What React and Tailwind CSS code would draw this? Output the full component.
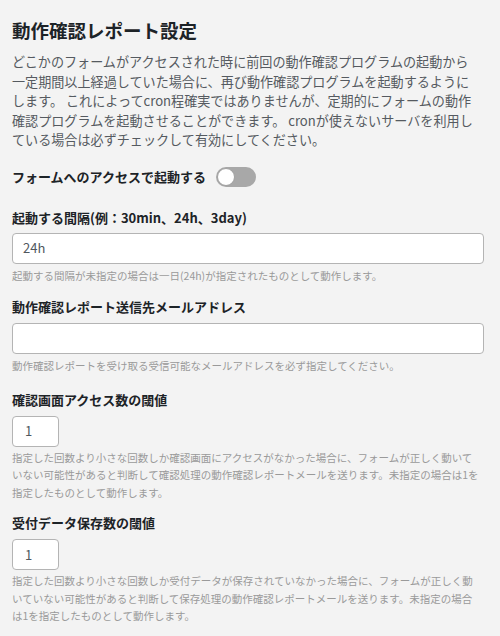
import React from "react";

const font = { fontFamily: '"Noto Sans CJK JP", "Noto Sans", sans-serif' };

function Label({ children, className = "" }) {
  return (
    <div className={"text-[13px] leading-[20px] font-bold text-[#1d2327] whitespace-nowrap " + className}>
      {children}
    </div>
  );
}

function Help({ lines, className = "" }) {
  return (
    <div className={"text-[10.5px] leading-[17.5px] text-[#9a9a9a] " + className}>
      {lines.map((l, i) => (
        <span key={i} className="block whitespace-nowrap">{l}</span>
      ))}
    </div>
  );
}

export default function App() {
  const para = [
    "どこかのフォームがアクセスされた時に前回の動作確認プログラムの起動から",
    "一定期間以上経過していた場合に、再び動作確認プログラムを起動するように",
    "します。 これによってcron程確実ではありませんが、定期的にフォームの動作",
    "確認プログラムを起動させることができます。 cronが使えないサーバを利用し",
    "ている場合は必ずチェックして有効にしてください。",
  ];
  return (
    <div style={font} className="w-[500px] h-[636px] bg-[#f3f3f3] px-[12px] pt-[18px] overflow-hidden">
      <h2 className="text-[18.5px] leading-[24px] font-bold text-[#1d2327] whitespace-nowrap">
        動作確認レポート設定
      </h2>
      <div className="mt-[10px] text-[13.1px] leading-[19.5px] text-[#555a60]">
        {para.map((l, i) => (
          <span key={i} className="block whitespace-nowrap">{l}</span>
        ))}
      </div>

      <div className="mt-[17px] flex items-center gap-[10px] h-[20px]">
        <Label>フォームへのアクセスで起動する</Label>
        <div className="relative w-[40px] h-[20px] rounded-full bg-[#a8a8a8]">
          <div className="absolute left-[1px] top-[1px] w-[18px] h-[18px] rounded-full bg-white border border-[#a0a0a0]" />
        </div>
      </div>

      <Label className="mt-[21px]">起動する間隔(例：30min、24h、3day)</Label>
      <div className="mt-[5px] w-[472px] h-[31px] bg-white border border-[#b4b4b4] rounded-[4px] flex items-center px-[10px] text-[13px] text-[#50575e]">
        24h
      </div>
      <Help className="mt-[3px]" lines={["起動する間隔が未指定の場合は一日(24h)が指定されたものとして動作します。"]} />

      <Label className="mt-[13px]">動作確認レポート送信先メールアドレス</Label>
      <div className="mt-[6px] w-[472px] h-[31px] bg-white border border-[#b4b4b4] rounded-[4px]" />
      <Help className="mt-[3px]" lines={["動作確認レポートを受け取る受信可能なメールアドレスを必ず指定してください。"]} />

      <Label className="mt-[15px]">確認画面アクセス数の閾値</Label>
      <div className="mt-[6px] w-[47px] h-[31px] bg-white border border-[#b4b4b4] rounded-[4px] flex items-center px-[12px] text-[13px] text-[#50575e]">
        1
      </div>
      <Help
        className="mt-[2px]"
        lines={[
          "指定した回数より小さな回数しか確認画面にアクセスがなかった場合に、フォームが正しく動いて",
          "いない可能性があると判断して確認処理の動作確認レポートメールを送ります。未指定の場合は1を",
          "指定したものとして動作します。",
        ]}
      />

      <Label className="mt-[12px]">受付データ保存数の閾値</Label>
      <div className="mt-[6px] w-[47px] h-[31px] bg-white border border-[#b4b4b4] rounded-[4px] flex items-center px-[12px] text-[13px] text-[#50575e]">
        1
      </div>
      <Help
        className="mt-[2px]"
        lines={[
          "指定した回数より小さな回数しか受付データが保存されていなかった場合に、フォームが正しく動",
          "いていない可能性があると判断して保存処理の動作確認レポートメールを送ります。未指定の場合",
          "は1を指定したものとして動作します。",
        ]}
      />
    </div>
  );
}
